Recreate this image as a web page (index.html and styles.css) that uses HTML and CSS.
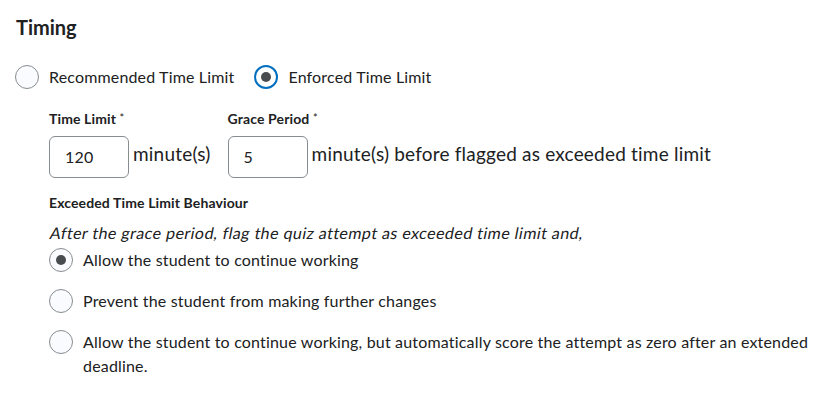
FILE: index.html
```html
<!DOCTYPE html>
<html>
<head>
<meta charset="utf-8">
<link rel="stylesheet" href="styles.css">
</head>
<body>
<div class="page">
  <h2 class="title">Timing</h2>
  <div class="type-row">
    <label class="radio-item">
      <span class="radio"></span>
      <span class="radio-text">Recommended Time Limit</span>
    </label>
    <label class="radio-item">
      <span class="radio radio-focus"><span class="dot"></span></span>
      <span class="radio-text">Enforced Time Limit</span>
    </label>
  </div>
  <div class="fields">
    <div class="field">
      <div class="label">Time Limit <span class="req">*</span></div>
      <div class="field-row">
        <div class="input">120</div>
        <span class="unit">minute(s)</span>
      </div>
    </div>
    <div class="field">
      <div class="label">Grace Period <span class="req">*</span></div>
      <div class="field-row">
        <div class="input">5</div>
        <span class="unit">minute(s) before flagged as exceeded time limit</span>
      </div>
    </div>
  </div>
  <div class="behaviour">
    <div class="label">Exceeded Time Limit Behaviour</div>
    <p class="hint"><span class="slant">After the grace period, flag the quiz attempt as exceeded time limit and,</span></p>
    <div class="options">
      <label class="option first">
        <span class="radio"><span class="dot"></span></span>
        <span class="option-text">Allow the student to continue working</span>
      </label>
      <label class="option">
        <span class="radio"></span>
        <span class="option-text">Prevent the student from making further changes</span>
      </label>
      <label class="option">
        <span class="radio"></span>
        <span class="option-text">Allow the student to continue working, but automatically score the attempt as zero after an extended deadline.</span>
      </label>
    </div>
  </div>
</div>
</body>
</html>
```
FILE: styles.css
```css
* { box-sizing: border-box; }
body {
  margin: 0;
  background: #ffffff;
  font-family: Lato, "Noto Sans", sans-serif;
  color: #202122;
}
.page {
  padding: 14px 16px 0 15px;
}
.title {
  margin: 0 0 0 1px;
  font-size: 20px;
  line-height: 26px;
  font-weight: 700;
  color: #202122;
}
.type-row {
  display: flex;
  align-items: center;
  gap: 20px;
  margin-top: 25px;
}
.radio-item {
  display: flex;
  align-items: center;
  gap: 10px;
  font-size: 16px;
  line-height: 24px;
  letter-spacing: 0.16px;
  color: #202122;
}
.radio {
  width: 24px;
  height: 24px;
  flex: none;
  border: 1px solid #868c8f;
  border-radius: 50%;
  background: #f9fbff;
  display: flex;
  align-items: center;
  justify-content: center;
}
.radio-focus {
  border: 2px solid #006fbf;
  background: #ffffff;
}
.dot {
  width: 10px;
  height: 10px;
  border-radius: 50%;
  background: #494c4e;
}
.fields {
  display: flex;
  gap: 17px;
  margin-top: 20px;
  padding-left: 34px;
}
.label {
  font-size: 14px;
  line-height: 18px;
  font-weight: 700;
  letter-spacing: 0.12px;
  color: #202122;
}
.req {
  font-size: 11px;
  font-weight: 400;
  vertical-align: 2px;
}
.field-row {
  display: flex;
  align-items: flex-start;
  gap: 4px;
  margin-top: 8px;
}
.input {
  width: 80px;
  height: 42px;
  border: 1px solid #868c8f;
  border-radius: 6px;
  padding-left: 15px;
  font-size: 16px;
  line-height: 40px;
  letter-spacing: 0.16px;
  color: #202122;
}
.unit {
  font-size: 19px;
  line-height: 36px;
  letter-spacing: 0.2px;
  color: #202122;
}
.behaviour {
  padding-left: 34px;
  margin-top: 16px;
}
.hint {
  margin: 9px 0 0 0;
  font-size: 16px;
  line-height: 24px;
  letter-spacing: 0.45px;
  color: #202122;
}
.slant {
  display: inline-block;
  transform: skewX(-11deg);
  transform-origin: left 75%;
}
.options {
  display: flex;
  flex-direction: column;
  gap: 17px;
  margin-top: 3px;
}
.option {
  display: flex;
  align-items: flex-start;
  gap: 10px;
  font-size: 16px;
  line-height: 24px;
  letter-spacing: 0.18px;
  color: #202122;
}
```
